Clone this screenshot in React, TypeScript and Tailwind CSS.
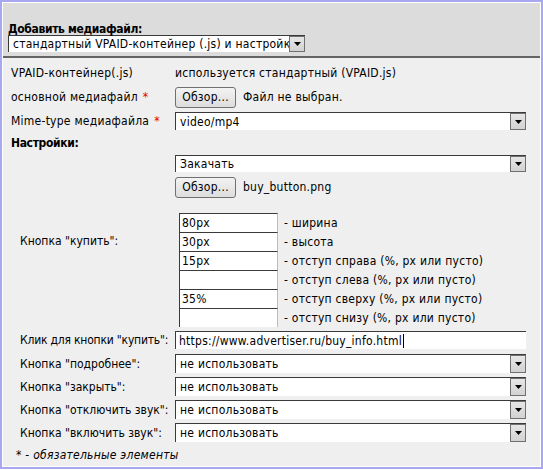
import React from "react";

const FONT = { fontFamily: '"DejaVu Sans Condensed", "DejaVu Sans", sans-serif' };

function Arrow() {
  return (
    <div className="w-[16px] h-full shrink-0 border border-[#707070] bg-gradient-to-b from-[#e6e6e6] to-[#d2d2d2] flex items-center justify-center">
      <svg width="7" height="4" viewBox="0 0 7 4">
        <path d="M0 0H7L3.5 4Z" fill="#000" />
      </svg>
    </div>
  );
}

function Select({ value, className }: { value: string; className: string }) {
  return (
    <div className={`flex items-stretch bg-white border-t border-l border-[#3a3a3a] ${className}`}>
      <span className="flex-1 flex items-center pl-[4px] whitespace-nowrap overflow-hidden">{value}</span>
      <Arrow />
    </div>
  );
}

function Btn() {
  return (
    <div className="w-[61px] h-[21px] shrink-0 rounded-[3px] border border-[#707070] bg-gradient-to-b from-[#f3f3f3] to-[#dddddd] flex items-center justify-center">
      Обзор...
    </div>
  );
}

function Star() {
  return <span className="text-[#e00000] ml-[5px]">*</span>;
}

function SmallInput({ value, label }: { value: string; label: string }) {
  return (
    <div className="flex items-center h-[19px]">
      <div className="ml-[4px] w-[99px] h-[19px] bg-white border-t border-l border-[#3a3a3a] border-r border-r-[#bdbdbd] flex items-center pl-[2px]">
        {value}
      </div>
      <span className="ml-[6px] whitespace-nowrap">{label}</span>
    </div>
  );
}

export default function App() {
  const selRows = [
    'Кнопка "подробнее":',
    'Кнопка "закрыть":',
    'Кнопка "отключить звук":',
    'Кнопка "включить звук":',
  ];
  return (
    <div className="w-[543px] h-[470px] bg-white text-[12px] text-black leading-[14px] tracking-[0.25px]" style={FONT}>
      <div className="w-[543px] h-[469px] border-2 border-[#a8a8f0]">
        <div className="h-full border border-white flex flex-col">
          <div className="h-[53px] bg-[#dcdcdc] px-[5px] pb-[4px] flex flex-col justify-end">
            <div className="font-bold h-[14px] tracking-[-0.35px] translate-y-[1px]">Добавить медиафайл:</div>
            <Select value="стандартный VPAID-контейнер (.js) и настройки" className="w-[297px] h-[17px]" />
          </div>
          <div className="h-[2px] bg-[#646464]" />
          <div className="flex-1 bg-[#efefef] pl-[8px] pt-[4px] pr-[14px]">
            <div className="flex items-center h-[22px]">
              <div className="w-[164px] shrink-0">VPAID-контейнер(.js)</div>
              <div>используется стандартный (VPAID.js)</div>
            </div>
            <div className="flex items-center h-[26px]">
              <div className="w-[164px] shrink-0">
                основной медиафайл
                <Star />
              </div>
              <div className="flex items-center">
                <Btn />
                <span className="ml-[7px]">Файл не выбран.</span>
              </div>
            </div>
            <div className="flex items-center h-[22px]">
              <div className="w-[164px] shrink-0">
                Mime-type медиафайла
                <Star />
              </div>
              <Select value="video/mp4" className="flex-1 h-[18px]" />
            </div>
            <div className="flex items-center h-[22px] font-bold tracking-[-0.35px]">Настройки:</div>
            <div className="flex">
              <div className="w-[164px] shrink-0 pl-[9px] flex items-center tracking-normal">Кнопка "купить":</div>
              <div className="flex-1 flex flex-col">
                <Select value="Закачать" className="mt-[1px] h-[17px]" />
                <div className="flex items-center mt-[4px] h-[22px]">
                  <Btn />
                  <span className="ml-[7px]">buy_button.png</span>
                </div>
                <div className="mt-[15px] flex flex-col">
                  <SmallInput value="80px" label="- ширина" />
                  <SmallInput value="30px" label="- высота" />
                  <SmallInput value="15px" label="- отступ справа (%, px или пусто)" />
                  <SmallInput value="" label="- отступ слева (%, px или пусто)" />
                  <SmallInput value="35%" label="- отступ сверху (%, px или пусто)" />
                  <SmallInput value="" label="- отступ снизу (%, px или пусто)" />
                </div>
              </div>
            </div>
            <div className="flex items-center mt-[4px] h-[18px]">
              <div className="w-[164px] shrink-0 pl-[9px] whitespace-nowrap tracking-[-0.2px]">Клик для кнопки "купить":</div>
              <div className="flex-1 h-[18px] bg-white border-t border-l border-[#3a3a3a] flex items-center pl-[3px] whitespace-nowrap">
                https://www.advertiser.ru/buy_info.html
                <span className="inline-block w-[1px] h-[14px] bg-black ml-[1px]" />
              </div>
            </div>
            <div className="mt-[3px]">
              {selRows.map((l) => (
                <div key={l} className="flex items-center h-[23px]">
                  <div className="w-[164px] shrink-0 pl-[9px] whitespace-nowrap tracking-normal">{l}</div>
                  <Select value="не использовать" className="flex-1 h-[19px]" />
                </div>
              ))}
            </div>
            <div className="flex items-center h-[22px] pl-[5px]">
              <span>* -&nbsp;</span>
              <span className="italic">обязательные элементы</span>
            </div>
          </div>
        </div>
      </div>
    </div>
  );
}
